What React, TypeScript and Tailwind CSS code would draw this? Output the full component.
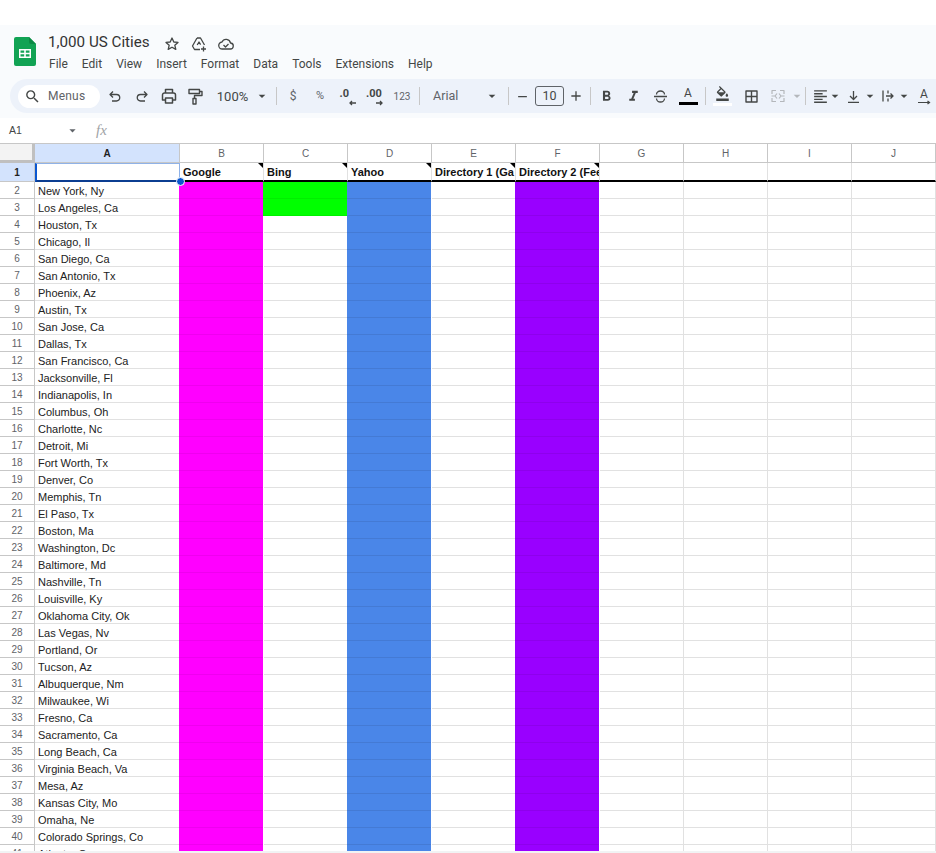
import type { ReactNode } from "react";
import {
  MdArrowDropDown,
  MdAdd,
  MdRemove,
  MdSearch,
  MdFormatBold,
  MdFormatItalic,
  MdFormatColorFill,
  MdFormatAlignLeft,
} from "react-icons/md";

const cities = [
  "New York, Ny", "Los Angeles, Ca", "Houston, Tx", "Chicago, Il", "San Diego, Ca", "San Antonio, Tx", "Phoenix, Az", "Austin, Tx",
  "San Jose, Ca", "Dallas, Tx", "San Francisco, Ca", "Jacksonville, Fl", "Indianapolis, In", "Columbus, Oh", "Charlotte, Nc", "Detroit, Mi",
  "Fort Worth, Tx", "Denver, Co", "Memphis, Tn", "El Paso, Tx", "Boston, Ma", "Washington, Dc", "Baltimore, Md", "Nashville, Tn",
  "Louisville, Ky", "Oklahoma City, Ok", "Las Vegas, Nv", "Portland, Or", "Tucson, Az", "Albuquerque, Nm", "Milwaukee, Wi", "Fresno, Ca",
  "Sacramento, Ca", "Long Beach, Ca", "Virginia Beach, Va", "Mesa, Az", "Kansas City, Mo", "Omaha, Ne", "Colorado Springs, Co", "Atlanta, Ga",
];

const menus = ["File", "Edit", "View", "Insert", "Format", "Data", "Tools", "Extensions", "Help"];
const columns = ["B", "C", "D", "E", "F", "G", "H", "I", "J"];
const headings = ["Google", "Bing", "Yahoo", "Directory 1 (Ga", "Directory 2 (Fee", "", "", "", ""];

function Sep({ className }: { className: string }) {
  return <div className={`w-px h-[18px] bg-[#c7c7c7] shrink-0 ${className}`} />;
}

function Caret({ className = "w-[8px]", muted }: { className?: string; muted?: boolean }) {
  return (
    <div className={`flex justify-center shrink-0 ${className} ${muted ? "text-[#b4b7bb]" : "text-[#444746]"}`}>
      <MdArrowDropDown size={16} className="shrink-0" />
    </div>
  );
}

function Slot({ className, children }: { className: string; children: ReactNode }) {
  return <div className={`flex items-center justify-center shrink-0 text-[#444746] ${className}`}>{children}</div>;
}

function Line({ size, d, color = "#444746", width = 1.3 }: { size: number; d: string; color?: string; width?: number }) {
  return (
    <svg width={size} height={size} viewBox={`0 0 ${size} ${size}`} fill="none" stroke={color} strokeWidth={width} strokeLinejoin="round">
      <path d={d} />
    </svg>
  );
}

function SheetsLogo() {
  return (
    <svg width="22" height="29" viewBox="0 0 22 29" className="shrink-0">
      <path d="M2 0h13l7 7v20a2 2 0 0 1-2 2H2a2 2 0 0 1-2-2V2a2 2 0 0 1 2-2z" fill="#12a354" />
      <path d="M15 0l7 7h-5a2 2 0 0 1-2-2z" fill="#0c8a45" />
      <path d="M5 12h12v9H5z M6.5 13.5v2.2h3.7v-2.2z M11.8 13.5v2.2h3.7v-2.2z M6.5 17.2v2.3h3.7v-2.3z M11.8 17.2v2.3h3.7v-2.3z" fill="#fff" fillRule="evenodd" />
    </svg>
  );
}

function Toolbar() {
  return (
    <div className="h-[34px] ml-[10px] pl-[8px] bg-[#edf2fa] rounded-l-[17px] flex items-center overflow-hidden">
      <div className="w-[82px] h-[23px] bg-white rounded-full flex items-center pl-[6px] shrink-0 text-[#444746]">
        <MdSearch size={17} />
        <span className="ml-[7px] text-[12px] tracking-[0.2px] text-[#5f6368]">Menus</span>
      </div>
      <Slot className="w-[27px] ml-px"><Line size={14} d="M5 2.5L2 5.5l3 3 M2.5 5.5h6a3.2 3.2 0 0 1 0 6.5H4" /></Slot>
      <Slot className="w-[27px]"><Line size={14} d="M9 2.5l3 3-3 3 M11.5 5.5h-6a3.2 3.2 0 0 0 0 6.5H10" /></Slot>
      <Slot className="w-[27px]"><Line size={16} width={1.5} d="M4.5 5V1.5h7V5 M4.5 12H1.5V7a2 2 0 0 1 2-2h9a2 2 0 0 1 2 2v5h-3 M4.5 10h7v5h-7z" /></Slot>
      <Slot className="w-[27px]"><Line size={17} width={1.4} d="M2 1.5h10.5v4H2z M12.5 3.5h2.5v4H7.5v3 M6 10.5h3v5.5H6z" /></Slot>
      <Slot className="w-[47px] text-[13px] pt-[2px]">100%</Slot>
      <Caret className="w-[12px]" />
      <Sep className="ml-[8px] mr-[3px]" />
      <Slot className="w-[26px] text-[12px]"><span className="text-[#5f6368]">$</span></Slot>
      <Slot className="w-[28px] text-[11px]"><span className="text-[#5f6368]">%</span></Slot>
      <Slot className="w-[25px]">
        <div className="relative w-[16px] h-[16px]">
          <span className="absolute left-[1px] top-[-1px] text-[11px] font-bold leading-[14px]">.0</span>
          <svg width="9" height="6" viewBox="0 0 9 6" className="absolute right-[-2px] bottom-[-2px]" fill="none" stroke="#444746" strokeWidth="1.3"><path d="M8 3H2 M4 1L2 3l2 2" /></svg>
        </div>
      </Slot>
      <Slot className="w-[32px]">
        <div className="relative w-[18px] h-[16px]">
          <span className="absolute left-0 top-[-1px] text-[11px] font-bold leading-[14px]">.00</span>
          <svg width="9" height="6" viewBox="0 0 9 6" className="absolute right-0 bottom-[-2px]" fill="none" stroke="#444746" strokeWidth="1.3"><path d="M1 3h6 M5 1l2 2-2 2" /></svg>
        </div>
      </Slot>
      <Slot className="w-[22px] text-[10px]"><span className="text-[#5f6368]">123</span></Slot>
      <Sep className="ml-[6px]" />
      <div className="w-[53px] ml-[13px] text-[12.5px] text-[#5f6368] shrink-0">Arial</div>
      <Caret className="w-[12px]" />
      <Sep className="ml-[10px]" />
      <Slot className="w-[26px]"><MdRemove size={15} /></Slot>
      <div className="w-[29px] h-[20px] border border-[#5f6368] rounded-[3px] flex items-center justify-center text-[12.5px] text-[#444746] shrink-0">10</div>
      <Slot className="w-[24px]"><MdAdd size={16} /></Slot>
      <Sep className="ml-[2px]" />
      <Slot className="w-[30px]"><MdFormatBold size={17} /></Slot>
      <Slot className="w-[24px]"><MdFormatItalic size={17} /></Slot>
      <Slot className="w-[30px]"><Line size={15} d="M3.5 5.5a4 3.5 0 0 1 8 0 M1 7.5h13 M3.5 9.5a4 3.5 0 0 0 8 0" /></Slot>
      <Slot className="w-[26px]">
        <div className="flex flex-col items-center">
          <span className="text-[12px] leading-[13px]">A</span>
          <div className="w-[19px] h-[3px] bg-black mt-[2px]" />
        </div>
      </Slot>
      <Sep className="ml-[4px]" />
      <Slot className="w-[32px]">
        <div className="flex flex-col items-center">
          <MdFormatColorFill size={15} />
          <div className="w-[19px] h-[3px] bg-white mt-[2px]" />
        </div>
      </Slot>
      <Slot className="w-[26px]"><Line size={15} width={1.4} d="M2 2h11v11H2z M7.5 2v11 M2 7.5h11" /></Slot>
      <Slot className="w-[28px]"><Line size={14} color="#b4b7bb" width={1.2} d="M1 5V1.5h4 M9 1.5h4V5 M1 9v3.5h4 M9 12.5h4V9 M0.5 7h4 M9.5 7h4 M6 4.5L4 7 6 9.5 M8 4.5L10 7 8 9.5" /></Slot>
      <Caret className="w-[10px]" muted />
      <Sep className="ml-[3px]" />
      <Slot className="w-[21px] ml-[4px]"><MdFormatAlignLeft size={17} /></Slot>
      <Caret />
      <Slot className="w-[25px] ml-[2px]"><Line size={13} d="M6.5 1v8 M3 6l3.5 3.5L10 6 M1 12.3h11" /></Slot>
      <Caret />
      <Slot className="w-[24px] ml-[2px]"><Line size={14} d="M2 1.5v11 M7 1.5v3 M7 9.5v3 M5 7h7 M9.5 4.5L12 7 9.5 9.5" /></Slot>
      <Caret />
      <Slot className="w-[32px]">
        <div className="flex flex-col items-center">
          <span className="text-[12px] leading-[12px]">A</span>
          <svg width="13" height="5" viewBox="0 0 13 5" fill="none" stroke="#444746" strokeWidth="1.2"><path d="M0 2.5h11 M9.5 1l2 1.5-2 1.5" /></svg>
        </div>
      </Slot>
    </div>
  );
}

function Note() {
  return <div className="absolute top-0 right-0 w-0 h-0 border-t-[5px] border-l-[5px] border-t-black border-l-transparent" />;
}

const rowHead = "w-[35px] shrink-0 bg-white border-r border-b border-[#c7c7c7] flex items-center justify-center text-[10px] text-[#5f6368]";

function CityRow({ n, city }: { n: number; city: string }) {
  return (
    <div className="flex h-[17px] shrink-0">
      <div className={rowHead}>{n}</div>
      <div className="w-[145px] shrink-0 border-r border-b border-[#e1e1e1] pl-[3px] pt-px text-[11px] leading-[16px] text-[#222] whitespace-nowrap overflow-hidden">{city}</div>
      <div className="w-[84px] shrink-0 -ml-px mr-px bg-[#ff00ff] border-b border-[#ef00ef]" />
      {n <= 3 ? (
        <div className="w-[84px] shrink-0 -ml-px mr-px bg-[#00ff00] border-b border-[#00ef00]" />
      ) : (
        <div className="w-[84px] shrink-0 border-r border-b border-[#e1e1e1]" />
      )}
      <div className="w-[84px] shrink-0 -ml-px mr-px bg-[#4a86e8] border-b border-[#447ad4]" />
      <div className="w-[84px] shrink-0 border-r border-b border-[#e1e1e1]" />
      <div className="w-[84px] shrink-0 -ml-px mr-px bg-[#9900ff] border-b border-[#8e00ec]" />
      <div className="w-[84px] shrink-0 border-r border-b border-[#e1e1e1]" />
      <div className="w-[84px] shrink-0 border-r border-b border-[#e1e1e1]" />
      <div className="w-[84px] shrink-0 border-r border-b border-[#e1e1e1]" />
      <div className="w-[84px] shrink-0 border-r border-b border-[#e1e1e1]" />
    </div>
  );
}

function Sheet() {
  return (
    <div className="flex-1 min-h-0 overflow-hidden flex flex-col border-t border-[#c7c7c7]">
      <div className="flex h-[19px] shrink-0">
        <div className="w-[35px] shrink-0 bg-[#f3f3f3] border-r-[3px] border-b-[3px] border-[#c0c0c0]" />
        <div className="w-[145px] shrink-0 bg-[#d3e3fd] border-r border-b border-[#c7c7c7] flex items-center justify-center pt-px text-[10px] font-bold text-[#1f1f1f]">A</div>
        {columns.map((c) => (
          <div key={c} className="w-[84px] shrink-0 bg-white border-r border-b border-[#c7c7c7] flex items-center justify-center pt-px text-[10px] text-[#5f6368]">{c}</div>
        ))}
      </div>
      <div className="flex h-[19px] shrink-0">
        <div className="w-[35px] shrink-0 bg-[#d3e3fd] border-r border-b border-[#c7c7c7] flex items-center justify-center pt-px text-[10px] font-bold text-[#1f1f1f]">1</div>
        <div className="w-[145px] shrink-0 border-l-2 border-b-2 border-t border-r border-l-[#0b57d0] border-b-[#0b3d91] border-t-[#8fb2e8] border-r-[#8fb2e8] relative">
          <div className="absolute right-[-6px] bottom-[-6px] w-[9px] h-[9px] rounded-full bg-[#0b57d0] border border-white z-10" />
        </div>
        {headings.map((h, i) => (
          <div key={columns[i]} className="w-[84px] shrink-0 relative border-r border-[#e1e1e1] border-b-2 border-b-black pl-[3px] pt-px text-[11px] font-bold leading-[17px] text-[#111] whitespace-nowrap overflow-hidden">
            {h}
            {i < 5 && <Note />}
          </div>
        ))}
      </div>
      {cities.map((c, i) => (
        <CityRow key={c} n={i + 2} city={c} />
      ))}
    </div>
  );
}

export default function App() {
  return (
    <div className="w-[936px] h-[853px] overflow-hidden bg-white flex flex-col font-['Liberation_Sans',Arial,sans-serif]">
      <div className="h-[25px] shrink-0" />
      <div className="h-[93px] shrink-0 bg-[#f9fbfd] font-['Roboto',sans-serif] flex flex-col">
        <div className="h-[54px] shrink-0 flex pl-[14px] pt-[12px]">
          <SheetsLogo />
          <div className="ml-[12px] mt-[-5px]">
            <div className="flex items-center h-[20px]">
              <span className="text-[15.2px] text-[#333] leading-[20px] w-[116px] whitespace-nowrap">1,000 US Cities</span>
              <div className="flex gap-[11px] items-center mt-[3px]">
                <Line size={16} d="M8 2l1.8 4 4.2.4-3.2 2.8 1 4.2L8 11.2l-3.8 2.2 1-4.2L2 6.4 6.2 6z" />
                <Line size={16} d="M6 2h3.5l4 7 M6 2L1.5 10l2 3.5H9 M6.2 9l1.8-3 1.6 2.6 M12.5 10.5v5 M10 13h5" />
                <Line size={16} d="M4.5 13a3.5 3.5 0 0 1-.5-7 4.5 4.5 0 0 1 8.5 1 3 3 0 0 1-.5 6z M5.5 9l2 2 3-3" />
              </div>
            </div>
            <div className="flex gap-[14px] mt-[3px] ml-px text-[12px] leading-[18px] text-[#444746] whitespace-nowrap">
              {menus.map((m) => (
                <span key={m}>{m}</span>
              ))}
            </div>
          </div>
        </div>
        <Toolbar />
      </div>
      <div className="h-[25px] shrink-0 flex items-center text-[10.5px] text-[#444746]">
        <span className="ml-[9px] w-[56px]">A1</span>
        <MdArrowDropDown size={15} className="text-[#5f6368]" />
        <span className="ml-[16px] text-[15px] italic font-['Liberation_Serif',serif] text-[#a0a3a6]">fx</span>
      </div>
      <Sheet />
      <div className="h-[2px] shrink-0 bg-[#f1f3f4]" />
    </div>
  );
}
